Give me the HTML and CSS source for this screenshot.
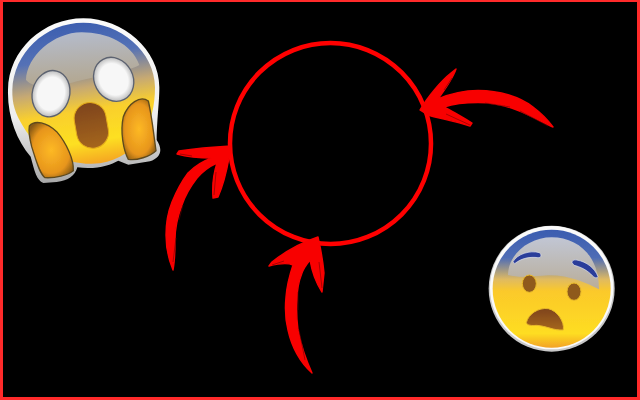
FILE: index.html
```html
<!DOCTYPE html>
<html lang="en">
<head>
<meta charset="utf-8">
<title>Reaction</title>
<link rel="stylesheet" href="styles.css">
</head>
<body>
<main class="stage">
  <svg class="marks" viewBox="0 0 640 400" aria-hidden="true">
    <defs>
      <filter id="soft" x="-10%" y="-10%" width="120%" height="120%"><feGaussianBlur stdDeviation="0.55"/></filter>
    </defs>
    <circle class="ring" cx="330.5" cy="143.5" r="100.5"/>
    <g class="arrows" filter="url(#soft)">
      <path d="M420 110 C428 96 442 80 451 73 L456 69 C453 78 446 88 438 99 C452 93 465 90.500 478 90.500 C500 90.500 520 97 533 107 C541 113 548 120 553 127 C542 122 530 115 517 110 C502 104 490 102.500 478 102.500 C465 102.500 453 104 444 107 C452 111 462 117 472 123 L470 126 C455 121 437 118 428 115 Z"/>
      <path d="M231 146 L229 158 C226 175 222 188 218 197 L213 198 C212 185 213 175 217 163 C208 167 202 172 197 178 C190 187 185 196 182 205 C177 218 175 228 175 240 C175 250 175 260 173 270 C168 258 166 248 166 235 C166 220 168 212 172 202 C177 190 182 181 188 173 C195 166 203 161 212 158 C200 158 188 157 177 154 L179 151 C192 149 212 147 231 146 Z"/>
      <path d="M318 237 C321 250 323 262 324 273 L322 292 C316 283 312 272 310 260 C306 265 303 270 302 273 C298 283 297 292 297 300 C296 312 297 322 298 330 C301 345 306 360 312 373 C300 362 292 348 288 330 C285 318 285 307 286 297 C287 284 290 274 293 265 C286 262 277 264 269 266 L272 262 C282 254 300 243 318 237 Z"/>
    </g>
    <g class="streaks" filter="url(#soft)">
      <path d="M446 114 L470 125 M452 78 L444 90 M520 111 L548 126 M485 103 L510 107"/>
      <path d="M180 154 L192 156 M216 172 L214 195 M173 262 L176 238 M179 220 L183 205"/>
      <path d="M272 265 L284 261 M319 262 L322 288 M305 360 L299 330 M298 310 L298 292"/>
    </g>
  </svg>

  <svg class="emoji emoji-scream" viewBox="0 0 540 600" aria-hidden="true">
    <defs>
      <linearGradient id="s-rim" x1="0" y1="0" x2="0" y2="1">
        <stop offset="0" stop-color="#fbfbfb"/>
        <stop offset="0.6" stop-color="#eeeeee"/>
        <stop offset="1" stop-color="#a8a8a8"/>
      </linearGradient>
      <linearGradient id="s-face" x1="0.42" y1="0" x2="0.58" y2="1">
        <stop offset="0" stop-color="#3d5fb0"/>
        <stop offset="0.24" stop-color="#5471b6"/>
        <stop offset="0.46" stop-color="#c6a973"/>
        <stop offset="0.62" stop-color="#f9cf2e"/>
        <stop offset="0.84" stop-color="#fde020"/>
        <stop offset="1" stop-color="#f5a623"/>
      </linearGradient>
      <linearGradient id="s-gloss" x1="0.4" y1="0" x2="0.55" y2="1">
        <stop offset="0" stop-color="#b4bbcb"/>
        <stop offset="1" stop-color="#b3a68c"/>
      </linearGradient>
      <radialGradient id="s-hand" cx="0.5" cy="0.5" r="0.6">
        <stop offset="0" stop-color="#fdb925"/>
        <stop offset="0.7" stop-color="#e7951c"/>
        <stop offset="1" stop-color="#8a5a14"/>
      </radialGradient>
      <linearGradient id="s-mouth" x1="0" y1="0" x2="0" y2="1">
        <stop offset="0" stop-color="#7e441a"/>
        <stop offset="1" stop-color="#a5661c"/>
      </linearGradient>
      <radialGradient id="s-eye" cx="0.5" cy="0.5" r="0.55">
        <stop offset="0.65" stop-color="#f7f7f7"/>
        <stop offset="1" stop-color="#a9a9a9"/>
      </radialGradient>
      <filter id="soft-s"><feGaussianBlur stdDeviation="1.6"/></filter>
    </defs>
    <g filter="url(#soft-s)">
      <path fill="url(#s-rim)" d="M250 55 C370 55 478 150 478 262 C478 310 472 340 470 420 C490 450 482 472 450 484 L385 494 L355 482 C330 495 290 510 232 502 C225 528 205 542 170 546 L130 549 C110 540 104 515 92 470 C50 420 22 350 24 270 C25 150 130 55 250 55 Z"/>
      <path fill="url(#s-face)" d="M250 68 C360 68 465 155 465 262 C465 370 420 470 300 490 C200 500 110 450 70 380 C45 340 36 310 37 270 C40 160 135 68 250 68 Z"/>
      <path fill="url(#s-gloss)" d="M245 97 C320 97 395 130 418 195 C395 212 300 225 215 248 C150 265 100 265 78 240 C80 170 160 97 245 97 Z"/>
      <path fill="url(#s-hand)" stroke="#5e4a1e" stroke-width="4" d="M88 378 C105 358 140 368 170 395 C200 430 222 480 220 512 C205 525 165 535 135 533 C118 520 108 480 95 440 C90 420 85 395 88 378 Z"/>
      <path fill="url(#s-hand)" stroke="#5e4a1e" stroke-width="4" d="M370 350 C385 310 420 285 445 303 C455 345 462 410 468 452 C450 470 410 482 385 478 C370 450 360 395 370 350 Z"/>
      <ellipse fill="url(#s-eye)" stroke="#5c6270" stroke-width="4" cx="153" cy="281" rx="56" ry="70" transform="rotate(14 153 281)"/>
      <ellipse fill="url(#s-eye)" stroke="#5c6270" stroke-width="4" cx="341" cy="238" rx="58" ry="68" transform="rotate(-28 341 238)"/>
      <rect fill="url(#s-mouth)" stroke="#e1a91a" stroke-width="3" x="226" y="307" width="96" height="138" rx="48" transform="rotate(-10 274 376)"/>
    </g>
  </svg>

  <svg class="emoji emoji-fear" viewBox="0 0 480 540" aria-hidden="true">
    <defs>
      <linearGradient id="f-face" x1="0" y1="0" x2="0" y2="1">
        <stop offset="0" stop-color="#3a5cb0"/>
        <stop offset="0.24" stop-color="#4f6db5"/>
        <stop offset="0.42" stop-color="#dfba62"/>
        <stop offset="0.52" stop-color="#fbc92a"/>
        <stop offset="0.88" stop-color="#fedd22"/>
        <stop offset="1" stop-color="#f3a326"/>
      </linearGradient>
      <linearGradient id="f-gloss" x1="0" y1="0" x2="0" y2="1">
        <stop offset="0" stop-color="#c1c6d4"/>
        <stop offset="1" stop-color="#b9ad98"/>
      </linearGradient>
      <linearGradient id="f-mouth" x1="0" y1="0" x2="0" y2="1">
        <stop offset="0" stop-color="#7e441a"/>
        <stop offset="1" stop-color="#a5661c"/>
      </linearGradient>
      <filter id="soft-f"><feGaussianBlur stdDeviation="1.4"/></filter>
    </defs>
    <g filter="url(#soft-f)">
      <circle fill="#c8c8c8" cx="215" cy="206" r="189"/>
      <circle fill="#fafafa" cx="215" cy="203" r="185"/>
      <circle fill="url(#f-face)" cx="215" cy="206" r="177"/>
      <path fill="url(#f-gloss)" d="M84 165 C85 100 150 52 215 52 C290 52 358 105 357 208 C320 190 270 165 205 166 C160 168 120 175 84 165 Z"/>
      <path fill="#2c3e9a" stroke="#dfe2ee" stroke-width="2" d="M99 125 C112 102 150 90 178 98 C186 103 184 114 174 113 C150 110 125 114 104 131 Z"/>
      <path fill="#2c3e9a" stroke="#dfe2ee" stroke-width="2" d="M276 128 C276 122 282 118 290 120 C320 125 345 145 354 170 C350 176 343 173 338 168 C322 150 300 140 282 136 Z"/>
      <ellipse fill="#8f5a1a" stroke="#e8b92a" stroke-width="3" cx="148" cy="191" rx="21" ry="26"/>
      <ellipse fill="#8f5a1a" stroke="#e8b92a" stroke-width="3" cx="282" cy="215" rx="21" ry="26"/>
      <path fill="url(#f-mouth)" stroke="#e8b92a" stroke-width="3" d="M139 308 C145 282 175 262 205 266 C232 272 254 305 250 330 C220 332 200 318 170 316 C155 317 142 317 139 308 Z"/>
    </g>
  </svg>
</main>
</body>
</html>
```

FILE: styles.css
```css
html, body {
  margin: 0;
  padding: 0;
  background: #000;
}

.stage {
  position: relative;
  width: 640px;
  height: 400px;
  box-sizing: border-box;
  background: #000;
  overflow: hidden;
}

.stage::after {
  content: "";
  position: absolute;
  inset: 0;
  border: 3px solid #ff2a2a;
  border-top-width: 2px;
  pointer-events: none;
}

.marks {
  position: absolute;
  left: 0;
  top: 0;
  width: 640px;
  height: 400px;
}

.ring {
  fill: none;
  stroke: #ff0000;
  stroke-width: 4.5;
}

.arrows {
  fill: #f80000;
  stroke: #f80000;
  stroke-width: 1.4;
  stroke-linejoin: round;
}

.streaks {
  fill: none;
  stroke: #6a0000;
  stroke-width: 1;
  opacity: 0.55;
}

.emoji {
  position: absolute;
  display: block;
}

.emoji-scream {
  left: 0;
  top: 0;
  width: 180px;
  height: 200px;
}

.emoji-fear {
  left: 480px;
  top: 220px;
  width: 160px;
  height: 180px;
}
```
